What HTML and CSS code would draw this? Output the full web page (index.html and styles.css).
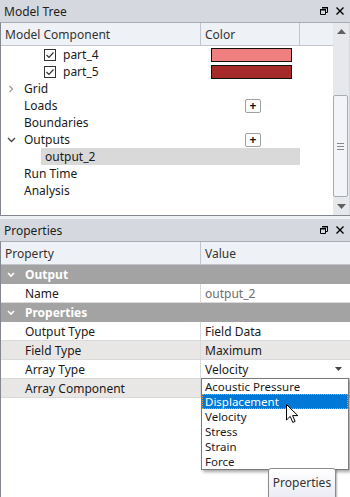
FILE: index.html
```html
<!DOCTYPE html>
<html lang="en">
<head>
    <meta charset="UTF-8">
    <meta name="viewport" content="width=device-width, initial-scale=1.0">
    <title>Model Tree</title>
    <link rel="stylesheet" href="styles.css">
</head>
<body>
    <!-- Model tree panel -->
    <div class="panel tree-panel">
        <div class="titlebar">
            <span>Model Tree</span>
            <div class="title-icons">
                <svg width="8" height="8" viewBox="0 0 8 8"><path d="M2.5 0.5h5v5h-2M0.5 2.5h5v5h-5z" fill="none" stroke="#000" stroke-width="1"/><path d="M2 0h6v1.5H2zM0 2h6v1.5H0z" fill="#000"/></svg>
                <svg width="8" height="8" viewBox="0 0 8 8"><path d="M0.5 0.5l7 7M7.5 0.5l-7 7" stroke="#000" stroke-width="1.4"/></svg>
            </div>
        </div>
        <div class="panel-body">
            <div class="grid">
                <div class="grid-header">
                    <div class="hcell col-name">Model Component</div>
                    <div class="hcell col-color">Color</div>
                    <div class="hcell col-rest"></div>
                </div>
                <div class="tree-row">
                    <div class="col-name node leaf">
                        <span class="checkbox"><svg width="12" height="12" viewBox="0 0 12 12"><rect x="0.5" y="0.5" width="11" height="11" fill="#fff" stroke="#333"/><path d="M2.5 6l2.5 2.5 4.5-5" fill="none" stroke="#333" stroke-width="1.2"/></svg></span>part_4
                    </div>
                    <div class="col-color"><span class="swatch" style="background:#f08080"></span></div>
                </div>
                <div class="tree-row">
                    <div class="col-name node leaf">
                        <span class="checkbox"><svg width="12" height="12" viewBox="0 0 12 12"><rect x="0.5" y="0.5" width="11" height="11" fill="#fff" stroke="#333"/><path d="M2.5 6l2.5 2.5 4.5-5" fill="none" stroke="#333" stroke-width="1.2"/></svg></span>part_5
                    </div>
                    <div class="col-color"><span class="swatch" style="background:#a52a2a"></span></div>
                </div>
                <div class="tree-row">
                    <div class="col-name node">
                        <span class="expander"><svg width="8" height="8" viewBox="0 0 8 8"><path d="M2.5 1l3 3-3 3" fill="none" stroke="#999" stroke-width="1.2"/></svg></span>Grid
                    </div>
                </div>
                <div class="tree-row">
                    <div class="col-name node"><span class="expander"></span>Loads</div>
                    <div class="col-color"><span class="add-btn">+</span></div>
                </div>
                <div class="tree-row">
                    <div class="col-name node"><span class="expander"></span>Boundaries</div>
                </div>
                <div class="tree-row">
                    <div class="col-name node">
                        <span class="expander"><svg width="9" height="8" viewBox="0 0 9 8"><path d="M1 2l3.5 3.5L8 2" fill="none" stroke="#444" stroke-width="1.3"/></svg></span>Outputs
                    </div>
                    <div class="col-color"><span class="add-btn">+</span></div>
                </div>
                <div class="tree-row">
                    <div class="node selected">output_2</div>
                </div>
                <div class="tree-row">
                    <div class="col-name node"><span class="expander"></span>Run Time</div>
                </div>
                <div class="tree-row">
                    <div class="col-name node"><span class="expander"></span>Analysis</div>
                </div>
            </div>
            <div class="scrollbar">
                <div class="scroll-arrow"><svg width="9" height="5" viewBox="0 0 9 5"><path d="M0 5L4.5 0 9 5z" fill="#606060"/></svg></div>
                <div class="scroll-track">
                    <div class="scroll-thumb">
                        <span class="grip"></span>
                    </div>
                </div>
                <div class="scroll-arrow"><svg width="9" height="5" viewBox="0 0 9 5"><path d="M0 0L4.5 5 9 0z" fill="#606060"/></svg></div>
            </div>
        </div>
    </div>

    <div class="panel-gap"></div>

    <!-- Properties panel -->
    <div class="panel props-panel">
        <div class="titlebar">
            <span>Properties</span>
            <div class="title-icons">
                <svg width="8" height="8" viewBox="0 0 8 8"><path d="M2.5 0.5h5v5h-2M0.5 2.5h5v5h-5z" fill="none" stroke="#000" stroke-width="1"/><path d="M2 0h6v1.5H2zM0 2h6v1.5H0z" fill="#000"/></svg>
                <svg width="8" height="8" viewBox="0 0 8 8"><path d="M0.5 0.5l7 7M7.5 0.5l-7 7" stroke="#000" stroke-width="1.4"/></svg>
            </div>
        </div>
        <div class="props-body">
            <div class="grid-header">
                <div class="hcell col-name">Property</div>
                <div class="hcell col-value">Value</div>
            </div>
            <div class="group-row">
                <span class="group-chevron"><svg width="8" height="6" viewBox="0 0 8 6"><path d="M1 1l3 3 3-3" fill="none" stroke="#fff" stroke-width="1.6"/></svg></span>Output
            </div>
            <div class="prop-row">
                <div class="col-name prop-name">Name</div>
                <div class="col-value prop-value muted">output_2</div>
            </div>
            <div class="group-row">
                <span class="group-chevron"><svg width="8" height="6" viewBox="0 0 8 6"><path d="M1 1l3 3 3-3" fill="none" stroke="#fff" stroke-width="1.6"/></svg></span>Properties
            </div>
            <div class="prop-row">
                <div class="col-name prop-name">Output Type</div>
                <div class="col-value prop-value">Field Data</div>
            </div>
            <div class="prop-row alt">
                <div class="col-name prop-name">Field Type</div>
                <div class="col-value prop-value">Maximum</div>
            </div>
            <div class="prop-row">
                <div class="col-name prop-name">Array Type</div>
                <div class="col-value prop-value combo">
                    <span>Velocity</span>
                    <svg width="7" height="4" viewBox="0 0 7 4"><path d="M0 0h7L3.5 4z" fill="#444"/></svg>
                </div>
            </div>
            <div class="prop-row alt">
                <div class="col-name prop-name">Array Component</div>
                <div class="col-value prop-value"></div>
            </div>

            <!-- Open combo list -->
            <ul class="dropdown">
                <li>Acoustic Pressure</li>
                <li class="active">Displacement</li>
                <li>Velocity</li>
                <li>Stress</li>
                <li>Strain</li>
                <li>Force</li>
            </ul>

            <div class="tooltip">Properties</div>

            <svg class="cursor" width="13" height="20" viewBox="0 0 13 20"><path d="M0.5 0.5v15.5l3.7-3.6 2.6 6 2.3-1-2.5-5.8h5.2z" fill="#fff" stroke="#000" stroke-width="1"/></svg>
        </div>
    </div>
</body>
</html>
```

FILE: styles.css
```css
body {
    font-family: 'Segoe UI', 'Noto Sans', 'Open Sans', sans-serif;
    font-size: 12px;
    color: #1a1a1a;
    margin: 0;
    padding: 0;
    width: 350px;
    height: 497px;
    overflow: hidden;
    background-color: #eef0f3;
}

.panel {
    display: flex;
    flex-direction: column;
}

.titlebar {
    height: 22px;
    background-color: #d5d9df;
    display: flex;
    align-items: center;
    justify-content: space-between;
    padding: 0 6px 0 4px;
    color: #1e1e1e;
}

.title-icons {
    display: flex;
    gap: 8px;
    align-items: center;
}

.title-icons svg {
    display: block;
}

/* Model tree */
.tree-panel {
    height: 216px;
}

.panel-body {
    flex-grow: 1;
    display: flex;
    background-color: #fff;
    border-left: 1px solid #828790;
    border-bottom: 1px solid #828790;
    border-top: 1px solid #a9adb3;
}

.grid {
    width: 332px;
}

.grid-header {
    display: flex;
    height: 22px;
    background-color: #eef1f5;
    border-bottom: 1px solid #c2c6cc;
}

.hcell {
    display: flex;
    align-items: center;
    padding-left: 4px;
    box-sizing: border-box;
    color: #333;
    border-right: 1px solid #c2c6cc;
}

.col-name {
    width: 200px;
    flex-shrink: 0;
}

.col-color {
    width: 99px;
    flex-shrink: 0;
}

.col-rest {
    flex-grow: 1;
    border-right: none;
}

.tree-row {
    display: flex;
    height: 17px;
    align-items: center;
}

.tree-row:first-of-type {
    margin-top: 1px;
}

.node {
    display: flex;
    align-items: center;
    height: 17px;
    box-sizing: border-box;
    padding-left: 6px;
}

.node.leaf {
    padding-left: 43px;
}

.checkbox {
    width: 12px;
    height: 12px;
    margin-right: 7px;
    display: flex;
}

.expander {
    width: 10px;
    height: 8px;
    margin-right: 7px;
    display: flex;
}

.node.selected {
    margin-left: 40px;
    width: 259px;
    padding-left: 4px;
    background-color: #d9d9d9;
}

.swatch {
    display: block;
    margin-left: 10px;
    width: 81px;
    height: 14px;
    box-sizing: border-box;
    border: 1px solid #111;
}

.add-btn {
    display: flex;
    align-items: center;
    justify-content: center;
    margin-left: 44px;
    width: 16px;
    height: 14px;
    box-sizing: border-box;
    border: 1px solid #a0a0a0;
    border-radius: 2px;
    background-color: #fcfcfc;
    font-size: 12px;
    font-weight: bold;
    line-height: 1;
    color: #111;
}

/* Scrollbar */
.scrollbar {
    width: 16px;
    background-color: #e6e8ec;
    display: flex;
    flex-direction: column;
    border-right: 1px solid #d5d9df;
}

.scroll-arrow {
    height: 17px;
    display: flex;
    align-items: center;
    justify-content: center;
}

.scroll-track {
    flex-grow: 1;
    display: flex;
    flex-direction: column;
    justify-content: flex-end;
    padding-bottom: 1px;
}

.scroll-thumb {
    height: 100px;
    margin: 0 1px 0 0;
    background-color: #f3f4f8;
    border: 1px solid #a7abb3;
    border-radius: 2px;
    display: flex;
    align-items: center;
    justify-content: center;
}

.grip {
    width: 7px;
    height: 5px;
    border-top: 1px solid #888;
    border-bottom: 1px solid #888;
    position: relative;
}

.grip::after {
    content: '';
    position: absolute;
    left: 0;
    right: 0;
    top: 2px;
    border-top: 1px solid #888;
}

.panel-gap {
    height: 3px;
}

/* Properties */
.props-panel {
    height: 278px;
}

.props-body {
    flex-grow: 1;
    position: relative;
    background-color: #fff;
    border-left: 1px solid #828790;
    border-top: 1px solid #a9adb3;
}

.props-body .grid-header {
    height: 22px;
}

.col-value {
    flex-grow: 1;
}

.props-body .hcell.col-name {
    width: 200px;
}

.props-body .hcell.col-value {
    border-right: none;
}

.group-row {
    height: 19px;
    display: flex;
    align-items: center;
    background-color: #a3a3a3;
    color: #fff;
    font-weight: bold;
    padding-left: 6px;
}

.group-chevron {
    display: flex;
    width: 18px;
}

.prop-row {
    display: flex;
    height: 18px;
    border-bottom: 1px solid #dadada;
}

.prop-row.alt {
    background-color: #e9e7e5;
}

.prop-name {
    display: flex;
    align-items: center;
    padding-left: 24px;
    box-sizing: border-box;
    border-right: 1px solid #dadada;
}

.prop-value {
    display: flex;
    align-items: center;
    padding-left: 4px;
}

.prop-value.muted {
    color: #6d6d6d;
}

.prop-value.combo {
    justify-content: space-between;
    padding-right: 8px;
}

.dropdown {
    position: absolute;
    left: 200px;
    top: 136px;
    width: 146px;
    margin: 0;
    padding: 0;
    list-style: none;
    background-color: #fff;
    border: 1px solid #7a7a7a;
    box-shadow: 2px 2px 3px rgba(0, 0, 0, 0.35);
    font-size: 11.5px;
}

.dropdown li {
    height: 15px;
    line-height: 15px;
    padding-left: 3px;
    box-sizing: border-box;
    overflow: hidden;
}

.dropdown li.active {
    background-color: #0078d7;
    color: #fff;
    outline: 1px dotted #f0a030;
    outline-offset: -1px;
}

.tooltip {
    position: absolute;
    left: 267px;
    top: 226px;
    width: 68px;
    height: 40px;
    box-sizing: border-box;
    padding-top: 5px;
    text-align: center;
    border: 1px solid #8c8c8c;
    border-radius: 3px;
    background: linear-gradient(#ffffff, #e4e5f0);
    box-shadow: 1px 1px 2px rgba(0, 0, 0, 0.3);
    color: #333;
}

.cursor {
    position: absolute;
    left: 285px;
    top: 162px;
}
```
